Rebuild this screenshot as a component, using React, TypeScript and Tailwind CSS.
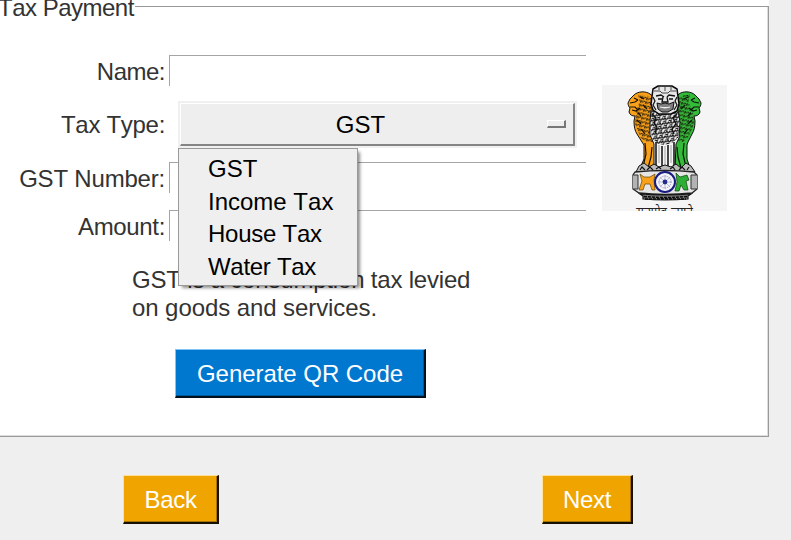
import type { ReactNode } from "react";

function Emblem() {
  return (
    <svg width="125" height="126" viewBox="0 0 125 126" className="block overflow-hidden bg-[#f5f5f5]">
      <defs>
        <pattern id="mane" width="5" height="4" patternUnits="userSpaceOnUse" patternTransform="rotate(14)">
          <path d="M0 1q1.200 2.600 2.500.3q1.200 2.600 2.500.2M1 3.600q1.300-1.600 2.300-.4" fill="none" stroke="#141005" strokeWidth="1" />
        </pattern>
        <pattern id="curls" width="5.500" height="4.500" patternUnits="userSpaceOnUse" patternTransform="rotate(-8)">
          <path d="M0 .5q1.400 3 2.700.4q1.400 3 2.800 0M.8 3.600q1.400 1.600 2.700-.4" fill="none" stroke="#151515" strokeWidth="1.400" />
        </pattern>
      </defs>

      {/* left lion */}
      <path d="M48 9c-4-3-12-3-16 1l-4 4-2 4c0 2 1 4 2 5l-1 4c1 3 3 4 6 4l-1 5c0 6 1 10 3 13l5 8 2 3v14l-4 9v4h13l2-9V13z" fill="#f9a11b" stroke="#111" strokeWidth="1" />
      <path d="M36 9c0 3 2 5 1 9l-3 9-1 12 6 14 5 4h7V12z" fill="url(#mane)" />
      <path d="M28 18l5-1 3-2M28 22h5l3 3M32 13l4 2M30 25l4 1 4-3M38 12l4 2M41 20l4 4M36 28l3 3M35 35l4 4M39 44l4 5M43 58l1 11-3 13M50 62l-1 10-3 11" fill="none" stroke="#171004" strokeWidth="1.200" />

      {/* right lion */}
      <path d="M77 9c4-3 12-3 16 1l4 4 2 4c0 2-1 4-2 5l1 4c-1 3-3 4-6 4l1 5c0 6-1 10-3 13l-4 8-1 3v14l3 9v4H75l-2-9V13z" fill="#35bb3a" stroke="#111" strokeWidth="1" />
      <path d="M88 9c0 3-2 5-1 9l4 9 1 12-6 14-5 4h-6V12z" fill="url(#mane)" />
      <path d="M97 18l-5-1-3-2M97 22h-5l-3 3M93 13l-4 2M95 25l-4 1-4-3M86 12l-4 2M83 20l-4 4M89 28l-3 3M90 35l-4 4M86 44l-4 5M82 58l-1 11 3 13M75 62l1 10 3 11" fill="none" stroke="#071505" strokeWidth="1.200" />

      {/* front lion: body and legs */}
      <path d="M49 25h27l2 12-1 16-3 6-1 26H52V59l-4-9V36z" fill="#f5f5f5" stroke="#111" strokeWidth="1" />
      <path d="M49 26h27l2 11-2 16-6 5-7 2-7-1-6-5-2-15z" fill="url(#curls)" />
      <path d="M50 29l4 4-2 5 3 4-2 6M75 29l-4 4 3 6-4 5 2 5" fill="none" stroke="#111" strokeWidth="1.300" />
      <path d="M54 57v23M60 61v22M66 60v23M72 57v23" stroke="#1c1c1c" strokeWidth="1.600" />
      <path d="M57 60v18M69 60v18M63 61v20" stroke="#888" strokeWidth=".8" />

      {/* front lion: head */}
      <path d="M51 4l5-3h14l5 3 2 15-2 7-6 3H57l-6-4-2-6z" fill="#e6e6e6" stroke="#080808" strokeWidth="1.500" />
      <path d="M52 6h6l2 2h6l2-2h6M57 2v3M63 1v5M69 2v3" fill="none" stroke="#444" strokeWidth="1" />
      <path d="M54 11l5-1 3 2M65 12l2-2 6 1M56 14h4M67 14h4M61 12l-1 5h6l-1-5" fill="none" stroke="#111" strokeWidth="1.300" />
      <path d="M55 18l4 1 4-1 4 1 5-2-1 7-5 3h-6l-4-3z" fill="#808080" stroke="#111" strokeWidth="1" />
      <path d="M58 22q5 1.500 10 0" fill="none" stroke="#eee" strokeWidth="1.300" />
      <path d="M51 12l2 4-2 4 3 5M75 12l-2 4 2 4-3 5" fill="none" stroke="#111" strokeWidth="1.200" />

      {/* feet and abacus */}
      <path d="M34 87l3-6 5-3 5 4 5-3 5 3 6-2 6 2 5-3 5 4 5-5 5 3 4 6z" fill="#bbb" stroke="#111" strokeWidth="1" />
      <path d="M38 85l2-3 3 3M45 85l3-3 3 3M54 84l3-2 2 2M68 84l3-2 2 3M77 85l3-3 3 3M85 85l2-3" fill="none" stroke="#111" strokeWidth="1.200" />
      <path d="M33 87q30-3 59 0l3 3v14l-5 4q-27 3-53 0l-6-4V90z" fill="#e6e6e6" stroke="#222" strokeWidth="1.300" />
      <path d="M31 90h5v14h-5M95 90h-6v14h6" fill="#b3b3b3" stroke="#333" strokeWidth="1" />
      <path d="M38 89l4 3h6l5-3-1 6 1 10h-3l-2-6h-5l-2 6h-4l3-9z" fill="#f9a11b" stroke="#634300" strokeWidth=".7" />
      <path d="M74 88l4 4 7-2 2 5-3 1 2 9h-4l-3-5-2 6h-4l2-9z" fill="#2eae35" stroke="#07420b" strokeWidth=".7" />
      <circle cx="63" cy="97" r="10" fill="#f4f4fa" stroke="#171c80" strokeWidth="2" />
      <circle cx="63" cy="97" r="6" fill="none" stroke="#8a8ec0" strokeWidth="1" strokeDasharray="1 1" />
      <path d="M63 90v14M56 97h14M58 92l10 10M58 102l10-10" stroke="#8084ba" strokeWidth=".5" />
      <circle cx="63" cy="97" r="2.400" fill="#252b8c" />
      <path d="M38 109q25 2 51 0l-3 2v3q-23 2-45 0v-3z" fill="#777" stroke="#111" strokeWidth="1.200" />
      <path d="M42 111.500q21 2 43 0M43 114h41" fill="none" stroke="#090909" strokeWidth="1.500" strokeDasharray="3 1" />

      <text x="34" y="132" textLength="31" lengthAdjust="spacingAndGlyphs" fontSize="14" fontFamily="'Noto Sans Devanagari', 'Noto Sans', sans-serif" fill="#222">
        सत्यमेव
      </text>
      <text x="69" y="132" textLength="22" lengthAdjust="spacingAndGlyphs" fontSize="14" fontFamily="'Noto Sans Devanagari', 'Noto Sans', sans-serif" fill="#222">
        जयते
      </text>
    </svg>
  );
}

function Label({ children, className = "" }: { children: ReactNode; className?: string }) {
  return <span className={`w-[165px] shrink-0 text-right leading-8 ${className}`}>{children}</span>;
}

function Field({ label, className, labelClass }: { label: string; className: string; labelClass: string }) {
  return (
    <label className={`flex h-[31px] ${className}`}>
      <Label className={`pt-px ${labelClass}`}>{label}</Label>
      <input
        aria-label={label}
        className="ml-1 h-[31px] w-[417px] border-t border-l border-[#a5a5a5] bg-white px-2 outline-none"
      />
    </label>
  );
}

const taxTypes = [
  { name: "GST", spacing: "tracking-normal" },
  { name: "Income Tax", spacing: "tracking-normal" },
  { name: "House Tax", spacing: "tracking-[-0.25px]" },
  { name: "Water Tax", spacing: "tracking-[-0.3px]" },
];
const orange =
  "h-[49px] border-t border-l border-r-2 border-b-2 border-t-[#ffe09a] border-l-[#ffe09a] border-r-[#151000] border-b-[#151000] bg-[#f0a400] pt-[2px] text-white tracking-[-0.3px] shadow-[inset_-1px_-1px_0_#a87300]";

export default function App() {
  return (
    <main className="h-[540px] w-[791px] overflow-hidden bg-[#efefef] font-['Liberation_Sans',Arial,sans-serif] text-[24px] text-[#333] [font-kerning:none]">
      <section className="flex h-[437px] w-[769px] flex-col bg-white">
        <div className="relative mt-[6px] h-[431px] border-t border-r border-b border-[#999] shadow-[inset_-1px_-1px_0_#ddd]">
          <h1 className="absolute top-[-15px] left-[-2px] bg-white pr-px leading-8 tracking-[-0.5px] whitespace-nowrap">
            Tax Payment
          </h1>
          <div className="flex h-[235px]">
            <form className="w-[586px] shrink-0">
              <Field label="Name:" className="mt-[48px]" labelClass="tracking-[-0.5px]" />
              <div className="relative mt-[15px] flex h-[47px]">
                <Label className="pt-[8px] tracking-[-0.3px]">Tax Type:</Label>
                <button
                  type="button"
                  className="ml-[13px] h-[47px] w-[399px] bg-[#f0f0f0] p-[2px] text-black"
                >
                  <span className="flex h-full items-center border-t border-l border-r-2 border-b-2 border-t-[#fff] border-l-[#fff] border-r-[#858585] border-b-[#858585] bg-[#eeeeee]">
                    <span className="flex-1 pt-[2px] pr-[33px] text-center">GST</span>
                    <span className="absolute right-[20px] h-[8px] w-[19px] border-t border-l border-r-2 border-b-2 border-t-white border-l-white border-r-[#777] border-b-[#777] bg-[#eee]" />
                  </span>
                </button>
                <ul className="absolute top-[47px] left-[178px] z-10 h-[138px] w-[180px] border border-[#999] bg-[#efefef] pt-[4px] pl-[29px] text-black shadow-[3px_3px_3px_-1px_#00000070]">
                  {taxTypes.map(({ name, spacing }) => (
                    <li key={name} className={`h-[32.700px] leading-8 ${spacing}`}>
                      {name}
                    </li>
                  ))}
                </ul>
              </div>
              <Field label="GST Number:" className="mt-[14px]" labelClass="tracking-[-0.2px]" />
              <Field label="Amount:" className="mt-[17px]" labelClass="tracking-[-0.35px]" />
            </form>
            <div className="mt-[78px] ml-[16px] h-[126px] w-[125px]">
              <Emblem />
            </div>
          </div>
          <p className="mt-[24px] ml-[132px] w-[345px] leading-7 tracking-[-0.19px]">
            GST is a consumption tax levied
            <br />
            <span className="tracking-[-0.08px]">on goods and services.</span>
          </p>
          <button
            type="button"
            className="mt-[27px] ml-[175px] block h-[49px] w-[251px] border-t border-l border-r-2 border-b-2 border-t-[#7fc4f5] border-l-[#7fc4f5] border-r-[#00101c] border-b-[#00101c] bg-[#0078d0] pt-[2px] text-white tracking-[-0.05px] shadow-[inset_-1px_-1px_0_#005a9c]"
          >
            Generate QR Code
          </button>
        </div>
      </section>
      <nav className="mt-[38px] ml-[123px] flex gap-[323px]">
        <button type="button" className={`w-[96px] ${orange}`}>
          Back
        </button>
        <button type="button" className={`w-[91px] ${orange}`}>
          Next
        </button>
      </nav>
    </main>
  );
}
